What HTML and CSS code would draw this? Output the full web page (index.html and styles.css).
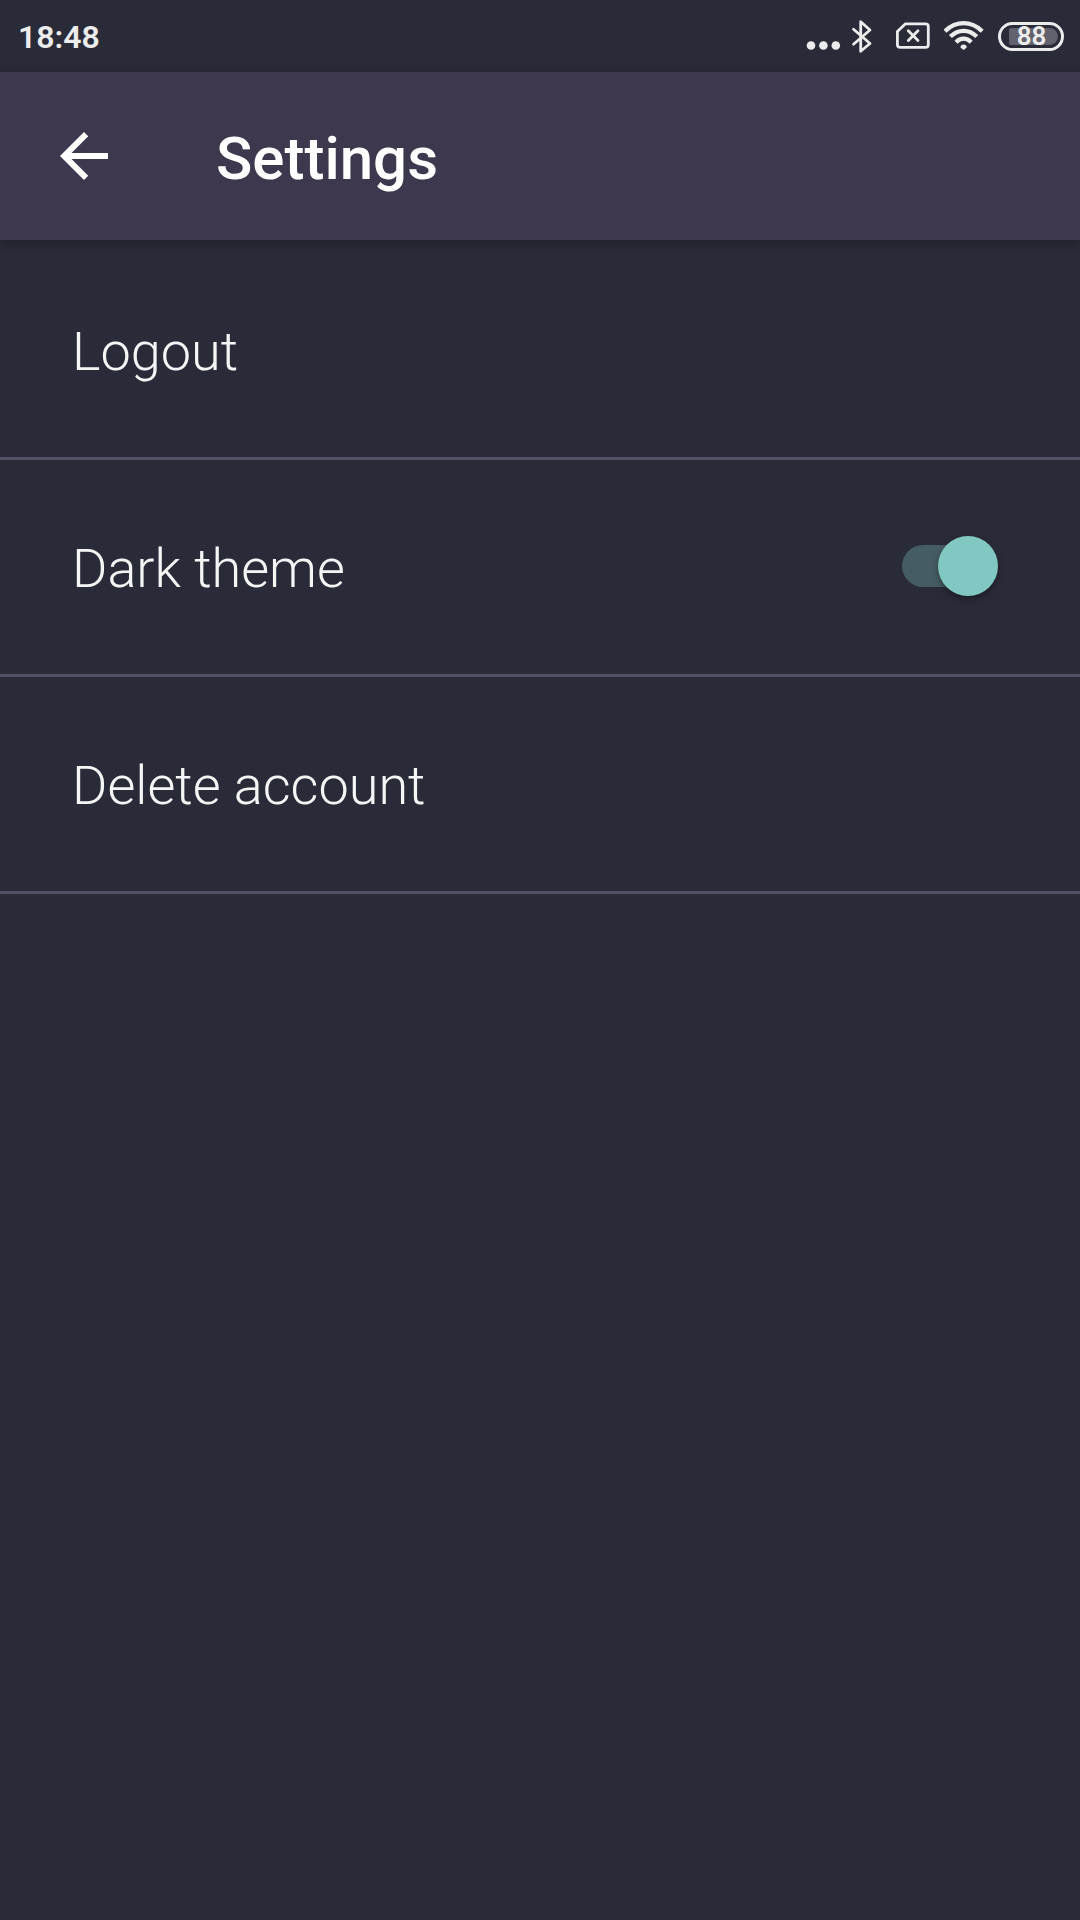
FILE: index.html
```html
<!DOCTYPE html>
<html lang="en">
<head>
  <meta charset="utf-8">
  <meta name="viewport" content="width=device-width, initial-scale=1">
  <title>Settings</title>
  <link rel="stylesheet" href="styles.css">
</head>
<body>
  <div class="status-bar">
    <span class="clock">18:48</span>
    <div class="status-icons">
      <div class="status-group">
        <svg width="36" height="40" viewBox="0 0 36 40" fill="currentColor" aria-hidden="true">
          <circle cx="5" cy="29.5" r="4.3"/><circle cx="17.4" cy="29.5" r="4.3"/><circle cx="29.8" cy="29.5" r="4.3"/>
        </svg>
        <svg width="32" height="40" viewBox="0 0 32 40" fill="none" stroke="currentColor" stroke-width="2.8" stroke-linecap="round" stroke-linejoin="round" aria-hidden="true">
          <path d="M3.5 13.3L20 27.5L10.7 35.3V5.7L20 14L3.5 28.2"/>
        </svg>
      </div>
      <svg width="34" height="40" viewBox="0 0 34 40" fill="none" stroke="currentColor" stroke-width="2.8" stroke-linecap="round" stroke-linejoin="round" aria-hidden="true">
        <path d="M9.5 7.8H29.5Q32.3 7.8 32.3 10.5V28.8Q32.3 31.4 29.5 31.4H4.2Q1.4 31.4 1.4 28.8V15.5Z"/>
        <path d="M12.3 14.8L22 24.6M22 14.8L12.3 24.6"/>
      </svg>
      <svg width="40" height="40" viewBox="0 0 40 40" fill="none" stroke="currentColor" stroke-width="4.2" aria-hidden="true">
        <path d="M1 15.2Q9.3 7.2 19.6 7.2T38.2 15.2"/>
        <path d="M6.4 20.6Q12.3 14.8 19.6 14.8T32.8 20.6"/>
        <path d="M12 26.2Q15.4 22.7 19.6 22.7T27.2 26.2"/>
        <path d="M16.4 31.2Q16.8 28.6 19.6 28.6T22.8 31.2Q22.6 32 19.6 34Q16.6 32 16.4 31.2Z" fill="currentColor" stroke="none"/>
      </svg>
      <div class="battery"><span class="battery-level">88</span></div>
    </div>
  </div>

  <header class="app-bar">
    <button class="back" type="button" aria-label="Back">
      <svg width="72" height="72" viewBox="0 0 24 24" fill="currentColor" aria-hidden="true">
        <path d="M20 11H7.83l5.59-5.59L12 4l-8 8 8 8 1.41-1.41L7.83 13H20v-2z"/>
      </svg>
    </button>
    <h1 class="title">Settings</h1>
  </header>

  <main>
    <ul class="settings">
      <li class="item"><button class="row" type="button"><span class="label">Logout</span></button></li>
      <li class="item">
        <label class="row" for="dark-theme">
          <span class="label">Dark theme</span>
          <input class="switch" id="dark-theme" type="checkbox" role="switch" checked>
        </label>
      </li>
      <li class="item"><button class="row" type="button"><span class="label">Delete account</span></button></li>
    </ul>
  </main>
</body>
</html>
```
FILE: styles.css
```css
:root {
  --background: #2a2b38;
  --bar: #3e384f;
  --divider: #52526b;
  --text: #f5f5f5;
  --accent: #80c8c1;
  --track: #465c64;
}

* {
  box-sizing: border-box;
}

body {
  margin: 0;
  min-height: 100vh;
  background: var(--background);
  color: var(--text);
  font-family: Roboto, "Liberation Sans", sans-serif;
}

button {
  border: 0;
  padding: 0;
  background: none;
  color: inherit;
  font: inherit;
  cursor: pointer;
}

svg {
  display: block;
}

.status-bar {
  display: flex;
  align-items: center;
  justify-content: space-between;
  height: 72px;
  padding: 0 16px 0 18px;
  color: #ececec;
}

.clock {
  padding-top: 2px;
  font-size: 32px;
  font-weight: 600;
  line-height: 40px;
}

.status-icons {
  display: flex;
  align-items: center;
  gap: 14px;
}

.status-group {
  display: flex;
  gap: 8px;
}

.battery {
  display: flex;
  width: 66px;
  height: 29px;
  padding: 3px 3px 3px 8px;
  border: 3px solid currentColor;
  border-radius: 15px;
}

.battery-level {
  flex: 1;
  border-radius: 2px 9px 9px 2px;
  background: #62626e;
  font-size: 26px;
  font-weight: 600;
  line-height: 16px;
  text-align: center;
  padding-right: 4px;
}

.app-bar {
  position: relative;
  display: flex;
  align-items: center;
  gap: 84px;
  height: 168px;
  padding: 0 48px;
  background: var(--bar);
  color: #fff;
  box-shadow: 0 3px 10px rgba(0, 0, 0, 0.3);
}

.back {
  width: 84px;
  height: 84px;
  display: grid;
  place-items: center start;
}

.title {
  margin: 0;
  padding-top: 6px;
  font-size: 60px;
  font-weight: 500;
  line-height: 72px;
}

.settings {
  margin: 0;
  padding: 3px 0 0;
  list-style: none;
}

.item {
  border-bottom: 3px solid var(--divider);
}

.row {
  display: flex;
  align-items: center;
  justify-content: space-between;
  width: 100%;
  min-height: 214px;
  padding: 0 82px 2px 72px;
  font-size: 54px;
  font-weight: 300;
  line-height: 64px;
  text-align: left;
  cursor: pointer;
}

.label {
  padding-top: 6px;
}

.switch {
  appearance: none;
  position: relative;
  width: 96px;
  height: 60px;
  margin: 0;
  cursor: pointer;
}

.switch::before {
  content: "";
  position: absolute;
  inset: 9px 6px 9px 0;
  border-radius: 21px;
  background: var(--track);
}

.switch::after {
  content: "";
  position: absolute;
  top: 0;
  left: 0;
  width: 60px;
  height: 60px;
  border-radius: 50%;
  background: #bdbdbd;
  box-shadow: 0 3px 6px rgba(0, 0, 0, 0.35);
}

.switch:checked::after {
  left: auto;
  right: 0;
  background: var(--accent);
}
```
